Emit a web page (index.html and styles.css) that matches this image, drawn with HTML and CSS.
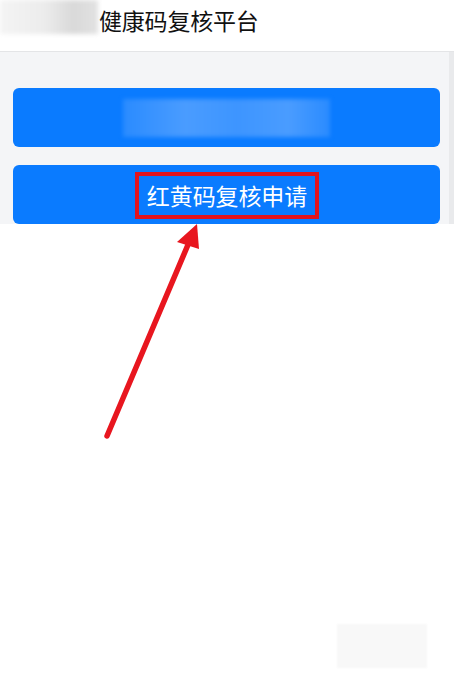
FILE: index.html
```html
<!DOCTYPE html>
<html lang="zh">
<head>
<meta charset="utf-8">
<title>健康码复核平台</title>
<link rel="stylesheet" href="styles.css">
</head>
<body>
<div class="page">
  <header class="header">
    <div class="logo-blur"></div>
    <h1 class="title">健康码复核平台</h1>
  </header>
  <section class="panel">
    <div class="btn"><div class="btn-blur"></div></div>
    <div class="btn"><span class="btn-label">红黄码复核申请</span></div>
  </section>
  <div class="watermark"></div>
  <svg class="arrow" width="454" height="679" viewBox="0 0 454 679">
    <line x1="107" y1="436" x2="190" y2="240" stroke="#e8161f" stroke-width="5.5" stroke-linecap="round"/>
    <polygon points="197,224 177,242 199,249" fill="#e8161f"/>
  </svg>
</div>
</body>
</html>
```
FILE: styles.css
```css
html, body {
  margin: 0;
  padding: 0;
  background: #ffffff;
}
.page {
  position: relative;
  width: 454px;
  height: 679px;
  overflow: hidden;
  font-family: "Noto Sans CJK SC", "Noto Sans", sans-serif;
}
.header {
  height: 51px;
  display: flex;
  align-items: flex-start;
  border-bottom: 1px solid #e4e5e7;
  background: #ffffff;
}
.logo-blur {
  width: 98px;
  height: 34px;
  background: linear-gradient(90deg, #f4f4f4 0%, #ececec 45%, #d9d9d9 75%, #e2e2e2 100%);
  filter: blur(2px);
}
.title {
  margin: 0 0 0 1px;
  padding-top: 4px;
  font-size: 23px;
  font-weight: 400;
  line-height: 32px;
  color: #111111;
  letter-spacing: -0.2px;
}
.panel {
  height: 172px;
  overflow: hidden;
  background: #f4f5f7;
  border-right: 5px solid #e9eaec;
  box-sizing: border-box;
  padding: 36px 9px 0 13px;
  display: flex;
  flex-direction: column;
  gap: 18px;
}
.btn {
  flex: 0 0 59px;
  height: 59px;
  border-radius: 6px;
  background: #0a7bff;
  display: flex;
  align-items: center;
  justify-content: center;
}
.btn-blur {
  width: 207px;
  height: 38px;
  background: linear-gradient(90deg, #2a8bff 0%, #4a9cff 30%, #3d95ff 55%, #4a9cff 80%, #2a8bff 100%);
  filter: blur(2px);
}
.btn-label {
  box-sizing: border-box;
  width: 184px;
  height: 47px;
  margin-top: 1px;
  margin-left: 1px;
  border: 4px solid #e2141e;
  display: flex;
  align-items: center;
  justify-content: center;
  color: #ffffff;
  font-size: 23px;
  line-height: 1;
  letter-spacing: -0.1px;
}
.watermark {
  position: absolute;
  left: 337px;
  top: 624px;
  width: 90px;
  height: 44px;
  background: #f8f8f8;
  filter: blur(1px);
}
.arrow {
  position: absolute;
  left: 0;
  top: 0;
}
```
